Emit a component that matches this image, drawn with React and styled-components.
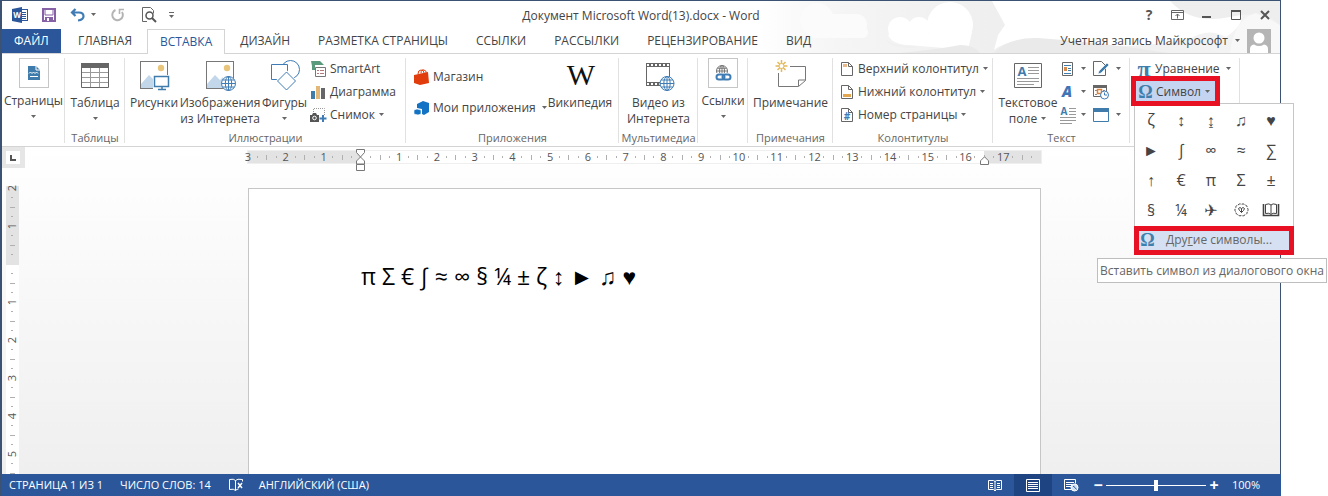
import React from 'react';
import styled, { createGlobalStyle } from 'styled-components';

const GlobalStyle = createGlobalStyle`
    * {
        box-sizing: border-box;
    }
    body {
        margin: 0;
        background: #fff;
        color: #444;
        font-family: "Open Sans", "Noto Sans", sans-serif;
        font-size: 12px;
        line-height: 16px;
    }
    button {
        margin: 0;
        padding: 0;
        border: 0;
        background: none;
        color: inherit;
        font: inherit;
    }
    svg {
        display: block;
        flex: none;
        overflow: visible;
    }
`

const Window = styled.div`
    display: flex;
    flex-direction: column;
    min-height: 100vh;
    margin: 0 47px 0 0;
    border: 1px solid #3b5273;
    border-left: 2px solid #3b5273;
    border-bottom: 0;
`

const Header = styled.header`
    position: relative;
    .art {
        position: absolute;
        top: 0;
        right: 0;
        overflow: hidden;
    }
`

const TitleBar = styled.div`
    position: relative;
    display: grid;
    grid-template-columns: 1fr auto 1fr;
    align-items: center;
    height: 28px;
    h1 {
        margin: 0;
        padding-top: 2px;
        font-size: 12px;
        font-weight: normal;
    }
`

const QuickAccess = styled.div`
    display: flex;
    align-items: center;
    padding-left: 8px;
`

const QuickButton = styled.button`
    display: flex;
    align-items: center;
    justify-content: center;
    gap: 5px;
    width: ${props => props.$w || 36}px;
    height: 24px;
`

const WindowButtons = styled.div`
    display: flex;
    justify-content: flex-end;
    padding-right: 1px;
    button {
        display: flex;
        align-items: center;
        justify-content: center;
        width: 29px;
        height: 24px;
    }
`

const TabRow = styled.nav`
    position: relative;
    display: flex;
    height: 25px;
    border-bottom: 1px solid #d4d4d4;
`

const Tab = styled.button`
    height: 24px;
    padding: 0 14px;
    white-space: nowrap;
`

const FileTab = styled(Tab)`
    width: 59px;
    margin-right: 3px;
    padding: 0 12px;
    background: #2b579a;
    color: #fff;
    text-align: left;
`

const ActiveTab = styled(Tab)`
    height: 25px;
    padding: 0 12px;
    margin: 0 1px;
    border: 1px solid #d4d4d4;
    border-bottom: 0;
    background: #fff;
    color: #2b579a;
`

const Account = styled.button`
    display: flex;
    align-items: center;
    gap: 6px;
    margin: 0 9px 0 auto;
    height: 24px;
`

const Ribbon = styled.div`
    display: flex;
    height: 93px;
    border-bottom: 1px solid #d4d4d4;
    background: #fff;
`

const Group = styled.section`
    position: relative;
    display: flex;
    flex-direction: column;
    flex: none;
    width: ${props => props.$w}px;
    padding-top: 3px;
    &::after {
        content: "";
        position: absolute;
        top: 4px;
        right: 0;
        bottom: 3px;
        width: 1px;
        background: #e1e1e1;
    }
    h2 {
        margin: 0;
        color: #666;
        font-size: 11px;
        font-weight: normal;
        text-align: center;
        white-space: nowrap;
    }
`

const GroupBody = styled.div`
    display: flex;
    height: 73px;
    padding: 0 ${props => props.$pad || 0}px;
    justify-content: ${props => props.$center ? 'center' : 'flex-start'};
`

const BigButton = styled.button`
    display: flex;
    flex-direction: column;
    align-items: center;
    width: ${props => props.$w || 60}px;
    height: 72px;
    padding-top: 2px;
    white-space: nowrap;
    span {
        display: flex;
        justify-content: center;
        align-items: center;
        gap: 3px;
        height: 16px;
    }
    svg + span {
        margin-top: 4px;
    }
`

const FoldedButton = styled(BigButton)`
    padding-top: 1px;
    .frame {
        display: flex;
        align-items: center;
        justify-content: center;
        width: 30px;
        height: 30px;
        margin-bottom: 5px;
        border: 1px solid #c6c6c6;
    }
`

const Stack = styled.div`
    display: flex;
    flex-direction: column;
    width: ${props => props.$w ? props.$w + 'px' : 'auto'};
    padding-top: ${props => props.$top || 0}px;
`

const SmallButton = styled.button`
    display: flex;
    align-items: center;
    gap: ${props => props.$gap || 3}px;
    height: ${props => props.$h || 23}px;
    white-space: nowrap;
`

const WideLabel = styled.span`
    margin-right: 2px;
`

const Glyph = styled.span`
    width: ${props => props.$w || 15}px;
    color: #3f7fae;
    font-family: "Liberation Serif", serif;
    font-size: ${props => props.$size || 18}px;
    font-weight: bold;
    line-height: 18px;
    text-align: center;
`

const SymbolArea = styled.div`
    position: relative;
    padding-left: 6px;
`

const SymbolButton = styled(SmallButton)`
    position: relative;
    z-index: 2;
    width: 79px;
    height: 20px;
    margin-top: 1px;
    padding: 1px 0 0 2px;
    background: #c5d5f1;
    outline: 5px solid #e81123;
`

const SymbolMenu = styled.div`
    position: absolute;
    z-index: 1;
    top: 46px;
    left: 4px;
    width: 160px;
    border: 1px solid #c6c6c6;
    background: #fff;
`

const SymbolGrid = styled.div`
    display: grid;
    grid-template-columns: repeat(5, 1fr);
    padding: 2px 7px 0 1px;
    button {
        height: 30px;
        padding-bottom: 2px;
        font-family: "Open Sans", "Liberation Sans", "DejaVu Sans", sans-serif;
        font-size: 16px;
        line-height: 24px;
    }
`

const MoreSymbols = styled.button`
    display: flex;
    align-items: center;
    gap: 11px;
    width: 160px;
    height: 29px;
    margin: 0 -1px -1px;
    padding: 0 0 1px 1px;
    border: 5px solid #e81123;
    background: #d5e1f2;
    color: #666;
    white-space: nowrap;
`

const Tooltip = styled.div`
    position: absolute;
    top: 154px;
    right: -34px;
    padding: 4px 2px 3px;
    border: 1px solid #bebebe;
    background: #fff;
    color: #666;
    text-align: center;
    white-space: nowrap;
`

const Workspace = styled.main`
    display: grid;
    grid-template-columns: 24px 1fr 17px;
    grid-template-rows: 39px 1fr;
    flex: 1;
    background: linear-gradient(#fff, #efefef);
`

const Corner = styled.div`
    width: 23px;
    height: 21px;
    padding: 4px;
    background: #e6e6e6;
    button {
        display: flex;
        align-items: center;
        justify-content: center;
        width: 14px;
        height: 13px;
        background: #fff;
    }
`

const RulerBar = styled.div`
    position: relative;
    display: grid;
    grid-template-columns: repeat(21, 1fr);
    width: 793px;
    height: 12px;
    margin: 4px auto 0;
    background: linear-gradient(90deg, #e3e3e3 112px, #fff 112px, #fff 736px, #e3e3e3 736px);
    box-shadow: 0 0 0 1px #efefef;
`

const SideRuler = styled.div`
    display: grid;
    grid-auto-rows: 38px;
    width: 13px;
    height: 290px;
    margin: -2px 0 0 4px;
    padding-top: 4px;
    overflow: visible clip;
    background: linear-gradient(transparent 2px, #e3e3e3 2px, #e3e3e3 81px, #fff 81px);
`

const Centimetre = styled.div`
    display: grid;
    grid-template-columns: ${props => props.$side ? 'none' : 'repeat(4, 1fr)'};
    grid-template-rows: ${props => props.$side ? 'repeat(4, 1fr)' : 'none'};
    color: #555;
    font-size: 11px;
    line-height: 12px;
`

const Mark = styled.span`
    display: flex;
    align-items: center;
    justify-content: center;
    width: ${props => props.$side ? '12px' : '0'};
    height: ${props => props.$side ? '0' : '12px'};
    b {
        font-weight: normal;
        transform: ${props => props.$side ? 'rotate(-90deg)' : 'none'};
    }
    i {
        flex: none;
        width: ${props => props.$side ? props.$len : 1}px;
        height: ${props => props.$side ? 1 : props.$len}px;
        background: #b0b0b0;
    }
`

const Indent = styled.svg`
    position: absolute;
    top: ${props => props.$top}px;
    left: ${props => props.$left}px;
`

const Page = styled.article`
    width: 793px;
    margin: 2px auto 0;
    padding: 70px 112px 0;
    border: 1px solid #c6c6c6;
    border-bottom: 0;
    background: #fff;
    color: #000;
    p {
        margin: 0;
        font-family: "Open Sans", "Liberation Sans", "DejaVu Sans", sans-serif;
        font-size: 23px;
        line-height: 34px;
        white-space: nowrap;
    }
`

const StatusBar = styled.footer`
    display: flex;
    align-items: center;
    height: 22px;
    margin-right: -1px;
    padding: 0 21px 0 7px;
    background: #2b579a;
    color: #fff;
    font-size: 11px;
    white-space: nowrap;
    > span {
        margin-right: 17px;
    }
    > svg {
        margin-right: 15px;
    }
`

const Views = styled.div`
    display: flex;
    margin-left: auto;
`

const ViewButton = styled.button`
    display: flex;
    align-items: center;
    justify-content: center;
    width: 38px;
    height: 22px;
    background: ${props => props.$on ? '#1e4582' : 'none'};
`

const Zoom = styled.div`
    display: flex;
    align-items: center;
    margin-left: 1px;
    button {
        width: 14px;
        height: 16px;
        font-size: 16px;
        font-weight: bold;
    }
    input {
        appearance: none;
        width: 100px;
        height: 12px;
        margin: 0 1px;
        background: linear-gradient(#fff, #fff) center / 100% 1px no-repeat;
    }
    input::-webkit-slider-thumb {
        appearance: none;
        width: 4px;
        height: 11px;
        background: #fff;
    }
    output {
        min-width: 28px;
        margin-left: 11px;
        text-align: right;
    }
`

const Arrow = () => (
    <svg width="7" height="4" viewBox="0 0 7 4"><path d="M1 0h5L3.5 3z" fill="#666" /></svg>
);

const Globe = ({ x, y, r, color = '#3f7cb5' }) => (
    <g transform={`translate(${x} ${y})`} fill="none" stroke={color}>
        <circle r={r} fill="#fff" />
        <ellipse rx={r / 2.2} ry={r} />
        <path d={`M0 ${-r}V${r}M${-r} 0H${r}M${-r * 0.85} ${-r / 2}H${r * 0.85}M${-r * 0.85} ${r / 2}H${r * 0.85}`} />
    </g>
);

const PictureBase = () => (
    <>
        <rect x="2.5" y="2.5" width="27" height="27" fill="#fff" stroke="#777" />
        <circle cx="23" cy="9" r="3.2" fill="#e9c57c" />
        <path d="M3 25l8-9 5 5 3-3v11H3z" fill="#c3d7ea" />
    </>
);

const PageIcon = ({ children }) => (
    <svg width="16" height="16" viewBox="0 0 16 16">
        <path d="M2.5 1.5h7l4 4v9h-11z" fill="#fff" stroke="#666" />
        <path d="M9.5 1.5v4h4" fill="none" stroke="#666" />
        {children}
    </svg>
);

const HeaderArt = () => (
    <svg className="art" width="520" height="52" viewBox="0 0 520 52" aria-hidden="true">
        <defs>
            <linearGradient id="sky" x1="0" x2="1" y1="0" y2="0">
                <stop offset="0" stopColor="#f3f3f3" stopOpacity="0" />
                <stop offset="0.15" stopColor="#f5f5f5" />
                <stop offset="0.5" stopColor="#eeeeee" />
                <stop offset="1" stopColor="#f4f4f4" />
            </linearGradient>
        </defs>
        <rect width="520" height="52" fill="url(#sky)" />
        <g fill="#fbfbfb">
            <circle cx="57" cy="19" r="17" />
            <rect x="60" y="13" width="47" height="22" rx="10" />
            <rect x="50" y="26" width="58" height="11" rx="5" />
        </g>
        <g fill="#fff">
            <circle cx="190" cy="24" r="23" />
            <circle cx="140" cy="28" r="12" />
            <circle cx="159" cy="27" r="11" />
            <path d="M128 34q4 9 20 10l60 5 4-18z" />
            <path d="M232 0h240q22 18-6 36-18-10-36 2-70 12-112 5-60-12-84 6l4-15 7-10z" />
        </g>
        <path d="M126 38q6 8 32 7l-4 2q-26 0-28-9z" fill="#f0f0f0" />
        <path d="M140 52q40-4 60-8 14 0 20 8zM234 52q16-16 44-15 60 4 130 15z" fill="#eaeaea" />
        <path d="M410 0q22 24 60 16t50 10V0z" fill="#eeeeee" />
        <path d="M470 52q4-34 26-40l24 12v28z" fill="#f8f8f8" />
    </svg>
);

const WordIcon = () => (
    <svg width="17" height="16" viewBox="0 0 17 16">
        <rect x="8.5" y="2.5" width="7" height="11" fill="#fff" stroke="#2b579a" />
        <path d="M9 5.5h5M9 7.5h5M9 9.5h5M9 11.5h5" stroke="#2b579a" />
        <path d="M0 2l10-2v16L0 14z" fill="#2b579a" />
        <text x="5" y="11" fill="#fff" fontSize="8" fontWeight="bold" textAnchor="middle">W</text>
    </svg>
);

const SaveIcon = () => (
    <svg width="14" height="14" viewBox="0 0 14 14">
        <path d="M1 1h12v12H1z" fill="#fff" stroke="#8661a6" strokeWidth="2" />
        <path d="M3 2v5h8V2" fill="none" stroke="#8661a6" />
        <path d="M3 9h8v5H3z" fill="#8661a6" />
        <path d="M5 10h2v3H5z" fill="#fff" />
    </svg>
);

const UndoIcon = () => (
    <svg width="15" height="14" viewBox="0 0 15 14">
        <path d="M5.5 1L2 4.5 5.5 8M2 4.5h7c3 0 4.5 1.5 4.5 3.7S11.5 12 8 12.5" fill="none" stroke="#3f7cb5" strokeWidth="2.2" />
    </svg>
);

const RedoIcon = () => (
    <svg width="14" height="14" viewBox="0 0 14 14">
        <path d="M4.5 2A5.3 5.3 0 1 0 11 4" fill="none" stroke="#b4b4b4" strokeWidth="2" />
        <path d="M8.5 6V1.5H13" fill="none" stroke="#b4b4b4" strokeWidth="1.6" />
    </svg>
);

const PreviewIcon = () => (
    <svg width="15" height="16" viewBox="0 0 15 16">
        <path d="M5 14.5H.5V.5h8l3 3v3" fill="none" stroke="#666" />
        <circle cx="7.5" cy="8.5" r="3.5" fill="#fff" stroke="#555" strokeWidth="1.5" />
        <path d="M10 11l4 4" stroke="#555" strokeWidth="2" />
    </svg>
);

const symbols = [
    'ζ', '↕', '↨', '♫', '♥',
    '►', '∫', '∞', '≈', '∑',
    '↑', '€', 'π', 'Σ', '±',
    '§', '¼', '✈', '❂', '🕮',
];

const CellDrawing = styled.svg`
    margin: 0 auto;
`

const OpenBook = () => (
    <CellDrawing width="18" height="14" viewBox="0 0 18 14">
        <path d="M1.5 1v11.5h15V1" fill="none" stroke="#444" strokeWidth="1.6" />
        <path d="M3.5 10.5V1.5Q7.5 0 9 2q1.5-2 5.5-.5v9Q10.5 9.5 9 11.5 7.5 9.5 3.5 10.5zM9 2v9" fill="#fff" stroke="#444" />
    </CellDrawing>
);

const Rosette = () => (
    <CellDrawing width="15" height="14" viewBox="0 0 15 14">
        <path d="M4 2q1.5-1.8 3.5-.7Q9.5.2 11 2q2.3.3 2.2 2.5Q15 7 13.2 9q0 2.3-2.2 2.8-1.5 1.7-3.5.7-2 1-3.5-.7Q1.8 11.3 1.8 9 0 7 1.8 4.5 1.7 2.3 4 2z" fill="none" stroke="#444" strokeDasharray="3 1" />
        <path d="M4.5 5.5q1.5-2 3 0 1.5-2 3 0-.5 2-3 4-2.5-2-3-4zM7.5 5.5v4" fill="none" stroke="#444" />
    </CellDrawing>
);

const drawnSymbols = { '❂': <Rosette />, '🕮': <OpenBook /> };

const Ruler = ({ side, labels }) => (
    <>
        {labels.map((label, i) => (
            <Centimetre key={i} $side={side}>
                <Mark $side={side}><b>{label}</b></Mark>
                <Mark $side={side} $len={2}><i /></Mark>
                <Mark $side={side} $len={5}><i /></Mark>
                <Mark $side={side} $len={2}><i /></Mark>
            </Centimetre>
        ))}
    </>
);

const topLabels = [3, 2, 1, '', 1, 2, 3, 4, 5, 6, 7, 8, 9, 10, 11, 12, 13, 14, 15, 16, 17];
const sideLabels = [2, 1, '', 1, 2, 3, 4, 5];

const App = () => {
    return (
        <>
            <GlobalStyle />
            <Window>
                <Header>
                    <HeaderArt />
                    <TitleBar>
                        <QuickAccess>
                            <QuickButton $w={20} aria-label="Word"><WordIcon /></QuickButton>
                            <QuickButton $w={38} aria-label="Сохранить"><SaveIcon /></QuickButton>
                            <QuickButton $w={31} aria-label="Отменить"><UndoIcon /><Arrow /></QuickButton>
                            <QuickButton $w={38} aria-label="Повторить"><RedoIcon /></QuickButton>
                            <QuickButton $w={24} aria-label="Просмотр"><PreviewIcon /></QuickButton>
                            <QuickButton $w={20} aria-label="Настройка панели">
                                <svg width="7" height="7" viewBox="0 0 7 7"><path d="M1 .5h5" stroke="#666" /><path d="M1 3h5L3.5 6z" fill="#666" /></svg>
                            </QuickButton>
                        </QuickAccess>
                        <h1>Документ Microsoft Word(13).docx - Word</h1>
                        <WindowButtons>
                            <button aria-label="Справка">
                                <svg width="10" height="12" viewBox="0 0 10 12"><text x="5" y="11" fill="#555" fontSize="14" fontWeight="bold" textAnchor="middle">?</text></svg>
                            </button>
                            <button aria-label="Параметры ленты">
                                <svg width="13" height="10" viewBox="0 0 13 10"><path d="M.5.5h12v9H.5zM0 2.5h13M6.5 8.5V4M4.5 6l2-2 2 2" fill="none" stroke="#666" /></svg>
                            </button>
                            <button aria-label="Свернуть">
                                <svg width="10" height="10" viewBox="0 0 10 10"><path d="M0 7h9" stroke="#555" strokeWidth="2" /></svg>
                            </button>
                            <button aria-label="Развернуть">
                                <svg width="10" height="10" viewBox="0 0 10 10"><path d="M.5.5h9v9H.5z" fill="none" stroke="#555" /><path d="M0 1h10" stroke="#555" strokeWidth="2" /></svg>
                            </button>
                            <button aria-label="Закрыть">
                                <svg width="10" height="10" viewBox="0 0 10 10"><path d="M1 1l8 8M9 1L1 9" stroke="#555" strokeWidth="2" /></svg>
                            </button>
                        </WindowButtons>
                    </TitleBar>
                    <TabRow>
                        <FileTab>ФАЙЛ</FileTab>
                        <Tab>ГЛАВНАЯ</Tab>
                        <ActiveTab>ВСТАВКА</ActiveTab>
                        <Tab>ДИЗАЙН</Tab>
                        <Tab>РАЗМЕТКА СТРАНИЦЫ</Tab>
                        <Tab>ССЫЛКИ</Tab>
                        <Tab>РАССЫЛКИ</Tab>
                        <Tab>РЕЦЕНЗИРОВАНИЕ</Tab>
                        <Tab>ВИД</Tab>
                        <Account>
                            Учетная запись Майкрософт
                            <Arrow />
                            <svg width="24" height="24" viewBox="0 0 24 24">
                                <path d="M0 0h24v24H0z" fill="#b5b5b5" />
                                <circle cx="12" cy="9" r="5.5" fill="#fff" />
                                <path d="M3 24v-4q0-4 4-4.5 5 3 10 0 4 .5 4 4.5v4z" fill="#fff" />
                            </svg>
                        </Account>
                    </TabRow>
                </Header>

                <Ribbon>
                    <Group $w={63}>
                        <GroupBody $center>
                            <FoldedButton>
                                <div className="frame">
                                    <svg width="12" height="14" viewBox="0 0 12 14">
                                        <path d="M0 0h8l4 4v10H0z" fill="#3f7cab" />
                                        <path d="M8 0v4h4" fill="none" stroke="#fff" />
                                        <path d="M1 7.5l1.5-1.5L4 7.5 5.5 6 7 7.5 8.5 6 10 7.5M2 10.5h8" fill="none" stroke="#fff" />
                                    </svg>
                                </div>
                                <span>Страницы</span>
                                <span><Arrow /></span>
                            </FoldedButton>
                        </GroupBody>
                    </Group>

                    <Group $w={60}>
                        <GroupBody $center>
                            <BigButton $w={54}>
                                <svg width="32" height="32" viewBox="0 0 32 32">
                                    <path d="M2.5 4.5h27v24h-27z" fill="#fff" stroke="#666" />
                                    <path d="M2 4h28v5H2z" fill="#666" />
                                    <path d="M3 13.5h26M3 18.5h26M3 23.5h26M11.5 9v19M20.5 9v19" stroke="#999" />
                                </svg>
                                <span>Таблица</span>
                                <span><Arrow /></span>
                            </BigButton>
                        </GroupBody>
                        <h2>Таблицы</h2>
                    </Group>

                    <Group $w={281}>
                        <GroupBody $pad={3}>
                            <BigButton $w={52}>
                                <svg width="32" height="32" viewBox="0 0 32 32">
                                    <PictureBase />
                                    <path d="M15 16h17v16H15z" fill="#fff" />
                                    <path d="M16.5 17.5h14v10h-14zM20 30.5h8M24 28v3" fill="#fff" stroke="#3f7cab" strokeWidth="1.5" />
                                </svg>
                                <span>Рисунки</span>
                            </BigButton>
                            <BigButton $w={80}>
                                <svg width="32" height="32" viewBox="0 0 32 32">
                                    <PictureBase />
                                    <Globe x={24.5} y={24.5} r={7} />
                                </svg>
                                <span>Изображения</span>
                                <span>из Интернета</span>
                            </BigButton>
                            <BigButton $w={49}>
                                <svg width="32" height="32" viewBox="0 0 32 32" fill="#fff" stroke="#3f7cb5">
                                    <circle cx="21.5" cy="10.5" r="9" />
                                    <path d="M2.5 5.5h16v15h-16z" />
                                    <path d="M17.5 13l9 9-9 9-9-9z" stroke="#fff" strokeWidth="3" />
                                    <path d="M17.5 13l9 9-9 9-9-9z" />
                                </svg>
                                <span>Фигуры</span>
                                <span><Arrow /></span>
                            </BigButton>
                            <Stack>
                                <SmallButton>
                                    <svg width="18" height="16" viewBox="0 0 18 16">
                                        <path d="M2 0h9l4 4H6v5H3V5z" fill="#5a9a7c" />
                                        <path d="M6.5 6.5h10v9h-10z" fill="#fff" stroke="#777" />
                                        <path d="M8 9.5h2M11 9.5h4M8 12.5h2M11 12.5h4" stroke="#b07a7a" />
                                    </svg>
                                    SmartArt
                                </SmallButton>
                                <SmallButton>
                                    <svg width="18" height="16" viewBox="0 0 18 16">
                                        <path d="M2 7h4v8H2z" fill="#3f7cab" />
                                        <path d="M7 2h4v13H7z" fill="#e3b778" />
                                        <path d="M12 4h4v11h-4z" fill="#666" />
                                    </svg>
                                    Диаграмма
                                </SmallButton>
                                <SmallButton>
                                    <svg width="18" height="16" viewBox="0 0 18 16">
                                        <path d="M4.5 7V1.5h11V9" fill="none" stroke="#999" strokeDasharray="1 1" />
                                        <path d="M1 8h2l1-2h3l1 2h2v7H1z" fill="#555" />
                                        <circle cx="5.5" cy="11" r="1.8" fill="#555" stroke="#fff" />
                                        <path d="M14 8v7M10.5 11.5h7" stroke="#3f7cb5" strokeWidth="2" />
                                    </svg>
                                    Снимок
                                    <Arrow />
                                </SmallButton>
                            </Stack>
                        </GroupBody>
                        <h2>Иллюстрации</h2>
                    </Group>

                    <Group $w={213}>
                        <GroupBody $pad={8}>
                            <Stack $top={4} $w={134}>
                                <SmallButton $h={31}>
                                    <svg width="16" height="16" viewBox="0 0 16 16">
                                        <path d="M0 6l14-3 1 11-9 2-6-2z" fill="#e03c0c" />
                                        <path d="M4 5q0-4 3-4t3 3M7 4.5Q7 0 10 1t2 3" fill="none" stroke="#e03c0c" />
                                    </svg>
                                    Магазин
                                </SmallButton>
                                <SmallButton $h={31}>
                                    <svg width="16" height="16" viewBox="0 0 16 16">
                                        <path d="M3 4l6-3 6 2v9l-5 3-2-1V9L3 8z" fill="#1273c4" />
                                        <path d="M0 10l3-1 4 1v4l-3 1-4-1z" fill="#1273c4" stroke="#fff" strokeWidth=".6" />
                                    </svg>
                                    <WideLabel>Мои приложения</WideLabel>
                                    <Arrow />
                                </SmallButton>
                            </Stack>
                            <BigButton $w={66}>
                                <svg width="32" height="32" viewBox="0 0 32 32">
                                    <text x="17" y="26" fill="#111" fontFamily="Liberation Serif" fontSize="30" textAnchor="middle">W</text>
                                </svg>
                                <span>Википедия</span>
                            </BigButton>
                        </GroupBody>
                        <h2>Приложения</h2>
                    </Group>

                    <Group $w={79}>
                        <GroupBody $center>
                            <BigButton $w={70}>
                                <svg width="32" height="32" viewBox="0 0 32 32">
                                    <path d="M3.5 4.5h23v21h-23z" fill="#fff" stroke="#666" />
                                    <path d="M3 6h24M3 25h14" stroke="#666" strokeWidth="4" />
                                    <path d="M4 6h23M4 25h13" stroke="#fff" strokeWidth="2" strokeDasharray="2 2" />
                                    <Globe x={24} y={24.5} r={7} />
                                </svg>
                                <span>Видео из</span>
                                <span>Интернета</span>
                            </BigButton>
                        </GroupBody>
                        <h2>Мультимедиа</h2>
                    </Group>

                    <Group $w={50}>
                        <GroupBody $center>
                            <FoldedButton $w={48}>
                                <div className="frame">
                                    <svg width="18" height="18" viewBox="0 0 18 18">
                                        <Globe x={8} y={7} r={5.5} color="#777" />
                                        <path d="M2 9h16v8H2z" fill="#fff" />
                                        <g fill="none" stroke="#3f7cb5" strokeWidth="2">
                                            <rect x="2.5" y="10.5" width="8" height="5" rx="2.5" />
                                            <rect x="8.5" y="10.5" width="8" height="5" rx="2.5" />
                                        </g>
                                    </svg>
                                </div>
                                <span>Ссылки</span>
                                <span><Arrow /></span>
                            </FoldedButton>
                        </GroupBody>
                    </Group>

                    <Group $w={85}>
                        <GroupBody $center>
                            <BigButton $w={76}>
                                <svg width="32" height="32" viewBox="0 0 32 32">
                                    <path d="M15 7.5h15.5v14l-7 6H3.5V14M23.5 27v-6h7" fill="none" stroke="#777" />
                                    <path d="M6.5 1v12M.5 7h12M2.5 3l8 8M10.5 3l-8 8" stroke="#e3b95a" strokeWidth="1.5" />
                                    <circle cx="6.5" cy="7" r="2.5" fill="#fff" stroke="#e3b95a" />
                                </svg>
                                <span>Примечание</span>
                            </BigButton>
                        </GroupBody>
                        <h2>Примечания</h2>
                    </Group>

                    <Group $w={160}>
                        <GroupBody $pad={6}>
                            <Stack>
                                <SmallButton>
                                    <PageIcon><path d="M4 3h4v3H4z" fill="#e9b98a" /></PageIcon>
                                    Верхний колонтитул
                                    <Arrow />
                                </SmallButton>
                                <SmallButton>
                                    <PageIcon><path d="M4 10h8v3H4z" fill="#e3a650" /></PageIcon>
                                    Нижний колонтитул
                                    <Arrow />
                                </SmallButton>
                                <SmallButton>
                                    <PageIcon><text x="8" y="13" fill="#3f7cb5" fontSize="10" fontWeight="bold" textAnchor="middle">#</text></PageIcon>
                                    Номер страницы
                                    <Arrow />
                                </SmallButton>
                            </Stack>
                        </GroupBody>
                        <h2>Колонтитулы</h2>
                    </Group>

                    <Group $w={137}>
                        <GroupBody $pad={4}>
                            <BigButton $w={62}>
                                <svg width="32" height="32" viewBox="0 0 32 32">
                                    <path d="M2.5 4.5h27v24h-27z" fill="#fff" stroke="#666" />
                                    <text x="10" y="17" fill="#3f7cab" fontSize="13" fontWeight="bold" textAnchor="middle">A</text>
                                    <path d="M16 8.5h11M16 11.5h11M16 14.5h11M5 19.5h22M5 22.5h22M5 25.5h17" stroke="#999" />
                                </svg>
                                <span>Текстовое</span>
                                <span>поле <Arrow /></span>
                            </BigButton>
                            <Stack>
                                <SmallButton aria-label="Экспресс-блоки">
                                    <svg width="18" height="16" viewBox="0 0 18 16">
                                        <path d="M3.5 1.5h10v13h-10z" fill="#fff" stroke="#666" />
                                        <path d="M5 4.5h7M5 12.5h7M9 7.5h3M9 9.5h3" stroke="#3f7cab" />
                                        <path d="M5 6h3v4H5z" fill="#d98a4a" />
                                    </svg>
                                    <Arrow />
                                </SmallButton>
                                <SmallButton aria-label="WordArt">
                                    <svg width="18" height="16" viewBox="0 0 18 16">
                                        <text x="8" y="13" fill="#3f74b5" fontSize="15" fontWeight="800" fontStyle="italic" textAnchor="middle">A</text>
                                    </svg>
                                    <Arrow />
                                </SmallButton>
                                <SmallButton aria-label="Буквица">
                                    <svg width="18" height="18" viewBox="0 0 18 18">
                                        <text x="5" y="9" fill="#3f7cab" fontSize="10" fontWeight="bold" textAnchor="middle">A</text>
                                        <path d="M10 2.5h7M10 5.5h7M10 8.5h7M1 11.5h16M1 14.5h16M1 17.5h12" stroke="#999" />
                                    </svg>
                                    <Arrow />
                                </SmallButton>
                            </Stack>
                            <Stack>
                                <SmallButton $gap={4} aria-label="Строка подписи">
                                    <svg width="24" height="16" viewBox="-6 0 24 16">
                                        <path d="M.5.5h8l4 4v10H.5z" fill="#fff" stroke="#666" />
                                        <path d="M5 13l1-3 8-8 2 2-8 8z" fill="#3f7cab" stroke="#fff" strokeWidth=".6" />
                                    </svg>
                                    <Arrow />
                                </SmallButton>
                                <SmallButton aria-label="Дата и время">
                                    <svg width="24" height="16" viewBox="-6 0 24 16">
                                        <path d="M.5 1.5h13v11H.5z" fill="#fff" stroke="#666" />
                                        <path d="M0 1h14v3H0z" fill="#666" />
                                        <path d="M2 6.5h2M10 6.5h2M2 10.5h2" stroke="#888" />
                                        <path d="M4.5 5.5h4v4h-4z" fill="#fff" stroke="#e08030" strokeWidth="1.5" />
                                        <circle cx="11.5" cy="11" r="4" fill="#fff" stroke="#3f7cb5" />
                                        <path d="M11.5 8.5V11H14" fill="none" stroke="#3f7cb5" />
                                    </svg>
                                </SmallButton>
                                <SmallButton $gap={4} aria-label="Объект">
                                    <svg width="24" height="16" viewBox="-6 0 24 16">
                                        <path d="M.5 1.5h15v13H.5z" fill="#fff" stroke="#3f7cab" />
                                        <path d="M0 1h16v4H0z" fill="#3f7cab" />
                                    </svg>
                                    <Arrow />
                                </SmallButton>
                            </Stack>
                        </GroupBody>
                        <h2>Текст</h2>
                    </Group>

                    <Group $w={110}>
                        <SymbolArea>
                            <SmallButton>
                                <Glyph $size={24} $w={16}>π</Glyph>
                                <WideLabel>Уравнение</WideLabel>
                                <Arrow />
                            </SmallButton>
                            <SymbolButton>
                                <Glyph>Ω</Glyph>
                                Символ
                                <Arrow />
                            </SymbolButton>
                            <SymbolMenu>
                                <SymbolGrid>
                                    {symbols.map(s => (
                                        <button key={s} aria-label={s}>{drawnSymbols[s] || s}</button>
                                    ))}
                                </SymbolGrid>
                                <MoreSymbols>
                                    <Glyph>Ω</Glyph>
                                    <span>Дру<u>г</u>ие символы...</span>
                                </MoreSymbols>
                                <Tooltip role="tooltip">Вставить символ из диалогового окна</Tooltip>
                            </SymbolMenu>
                        </SymbolArea>
                    </Group>
                </Ribbon>

                <Workspace>
                    <Corner>
                        <button aria-label="Табуляция">
                            <svg width="6" height="6" viewBox="0 0 6 6"><path d="M1 0v5h5" fill="none" stroke="#555" strokeWidth="2" /></svg>
                        </button>
                    </Corner>
                    <div>
                        <RulerBar>
                            <Ruler labels={topLabels} />
                            <Indent $left={107} $top={-2} width="11" height="22" viewBox="0 0 11 22" fill="#fff" stroke="#777">
                                <path d="M1.5.5h8v3l-4 4.5-4-4.5zM5.5 8l4 4v3h-8v-3zM1.5 15.5h8v6h-8z" />
                            </Indent>
                            <Indent $left={731} $top={5} width="11" height="9" viewBox="0 0 11 9" fill="#fff" stroke="#777">
                                <path d="M5.5.8l4 4v3.700h-8V4.8z" />
                            </Indent>
                        </RulerBar>
                    </div>
                    <span />
                    <SideRuler>
                        <Ruler side labels={sideLabels} />
                    </SideRuler>
                    <Page>
                        <p>π Σ € ∫ ≈ ∞ § ¼ ± ζ ↕ ► ♫ ♥</p>
                    </Page>
                </Workspace>

                <StatusBar>
                    <span>СТРАНИЦА 1 ИЗ 1</span>
                    <span>ЧИСЛО СЛОВ: 14</span>
                    <svg width="16" height="14" viewBox="0 0 16 14" fill="none" stroke="#fff">
                        <path d="M7.5 12.5Q6 10.5 1.5 11.5v-10Q6 .5 7.5 2.5zM7.5 2.5Q9 .5 14.5 1.5v2M7.5 12.5q1.5-1.5 3-1.5" />
                        <path d="M10 5l4 5M14 5l-4 5" strokeWidth="1.5" />
                    </svg>
                    <span>АНГЛИЙСКИЙ (США)</span>
                    <Views>
                        <ViewButton aria-label="Режим чтения">
                            <svg width="14" height="13" viewBox="0 0 14 13" fill="none" stroke="#fff">
                                <path d="M.5 1.5h5l1.5 1 1.5-1h5v9h-5L7 12l-1.5-1.5h-5zM7 2v9M2 4.5h3M2 6.5h3M2 8.5h3M9 4.5h3M9 6.5h3M9 8.5h3" />
                            </svg>
                        </ViewButton>
                        <ViewButton $on aria-label="Разметка страницы">
                            <svg width="14" height="13" viewBox="0 0 14 13" fill="none" stroke="#fff">
                                <path d="M.5.5h13v12H.5zM2 3.5h10M2 5.5h10M2 7.5h10M2 9.5h10" />
                            </svg>
                        </ViewButton>
                        <ViewButton aria-label="Веб-документ">
                            <svg width="15" height="13" viewBox="0 0 15 13" fill="none" stroke="#fff">
                                <path d="M7 10.5H.5V.5h11v4M2 3.5h8M2 5.5h6M2 7.5h5" />
                                <circle cx="10.5" cy="8.5" r="3.5" fill="#cfe0f2" />
                                <path d="M9 7l2 1.5 1.5 2" stroke="#2b579a" />
                            </svg>
                        </ViewButton>
                    </Views>
                    <Zoom>
                        <button aria-label="Уменьшить">−</button>
                        <input type="range" min="10" max="190" defaultValue="100" aria-label="Масштаб" />
                        <button aria-label="Увеличить">+</button>
                        <output>100%</output>
                    </Zoom>
                </StatusBar>
            </Window>
        </>
    );
};

export default App;
